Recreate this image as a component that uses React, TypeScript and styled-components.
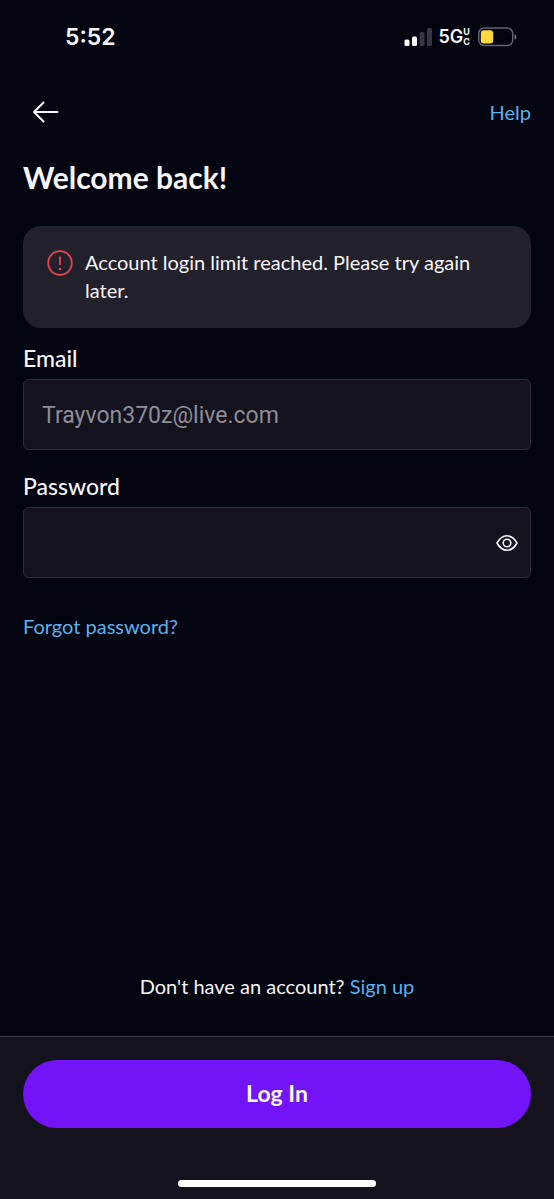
import React, { useState } from "react";
import styled, { createGlobalStyle } from "styled-components";

const GlobalStyle = createGlobalStyle`
  *, *::before, *::after { box-sizing: border-box; }
  body {
    margin: 0;
    background: #020410;
    color: #f7f6fa;
    font-family: Lato, "Liberation Sans", sans-serif;
  }
  button, input { font-family: inherit; }
`;

const Screen = styled.div`
  display: flex;
  flex-direction: column;
  min-height: 100vh;
`;

const StatusBar = styled.div`
  display: flex;
  align-items: center;
  justify-content: space-between;
  height: 74px;
  padding: 0 37px 0 65px;
  font-family: Inter, sans-serif;
`;

const Time = styled.time`
  font-size: 23px;
  line-height: 28px;
  font-weight: 600;
`;

const StatusIcons = styled.div`
  display: flex;
  align-items: center;
`;

const Network = styled.div`
  display: flex;
  align-items: center;
  margin: 0 8px 0 7px;
  font-size: 18px;
  line-height: 20px;
  font-weight: 600;
`;

const NetworkSuffix = styled.span`
  display: flex;
  flex-direction: column;
  font-size: 9px;
  line-height: 10px;
  font-weight: 700;
`;

const Header = styled.header`
  display: flex;
  align-items: center;
  justify-content: space-between;
  height: 76px;
  padding: 0 23px 0 32px;
`;

const IconButton = styled.button`
  display: flex;
  padding: 0;
  border: 0;
  background: none;
  color: inherit;
  cursor: pointer;
`;

const Link = styled.a`
  color: #58b3ed;
  font-size: 20px;
  line-height: 28px;
  text-decoration: none;
`;

const Main = styled.main`
  display: flex;
  flex: 1;
  flex-direction: column;
  padding: 8px 23px 36px;
`;

const Title = styled.h1`
  margin: 0 0 30px;
  font-size: 30px;
  line-height: 38px;
  font-weight: 700;
`;

const Alert = styled.div`
  display: flex;
  gap: 12px;
  margin-bottom: 16px;
  padding: 22px 24px 24px;
  border-radius: 18px;
  background: #21202b;
`;

const AlertIcon = styled.svg`
  flex: none;
`;

const AlertText = styled.p`
  margin: 0;
  font-size: 20px;
  line-height: 28px;
`;

const Form = styled.form`
  display: flex;
  flex-direction: column;
  align-items: flex-start;
`;

const Field = styled.div`
  width: 100%;
  margin-bottom: 22px;
`;

const Label = styled.label`
  display: block;
  margin-bottom: 7px;
  font-size: 23px;
  line-height: 28px;
  font-weight: 500;
`;

const InputBox = styled.div`
  display: flex;
  align-items: center;
  height: 71px;
  padding: 0 11px 0 18px;
  border: 1px solid #2c2b37;
  border-radius: 6px;
  background: #13121d;
`;

const Input = styled.input`
  flex: 1;
  min-width: 0;
  height: 100%;
  padding: 2px 0 0;
  border: 0;
  outline: 0;
  background: none;
  color: #f7f6fa;
  font-family: Roboto, sans-serif;
  font-size: 23px;

  &::placeholder {
    color: #8e8d98;
    opacity: 1;
  }
`;

const ForgotLink = styled(Link)`
  margin-top: 12px;
`;

const SignUpPrompt = styled.p`
  margin: auto 0 0;
  font-size: 20px;
  line-height: 28px;
  text-align: center;
`;

const Footer = styled.footer`
  display: flex;
  flex-direction: column;
  align-items: center;
  padding: 23px 23px 12px;
  border-top: 1px solid #393843;
  background: #13121d;
`;

const LoginButton = styled.button`
  width: 100%;
  height: 68px;
  padding: 0 0 2px;
  border: 0;
  border-radius: 34px;
  background: #7214f5;
  color: #f7f6fa;
  font-size: 23px;
  font-weight: 700;
  cursor: pointer;
`;

const HomeIndicator = styled.div`
  width: 198px;
  max-width: 50%;
  height: 7px;
  margin-top: 52px;
  border-radius: 4px;
  background: #ffffff;
`;

function SignalIcon() {
  return (
    <svg width="28" height="18" viewBox="0 0 28 18" aria-hidden="true">
      <rect x="0.5" y="11.500" width="5" height="6.500" rx="1.5" fill="#fff" />
      <rect x="8" y="8.500" width="5" height="9.500" rx="1.5" fill="#fff" />
      <rect x="15.5" y="4" width="5" height="14" rx="1.5" fill="#363643" />
      <rect x="23" y="0" width="5" height="18" rx="1.5" fill="#363643" />
    </svg>
  );
}

function BatteryIcon() {
  return (
    <svg width="39" height="20" viewBox="0 0 39 20" aria-hidden="true">
      <rect x="0.75" y="1" width="34" height="17.5" rx="5.5" fill="none" stroke="#62626d" strokeWidth="1.5" />
      <rect x="2.8" y="3.2" width="12.4" height="13.2" rx="3" fill="#ffd83d" />
      <path d="M36.6 7.2c2.3.8 2.3 4.6 0 5.4z" fill="#777681" />
    </svg>
  );
}

function EyeIcon() {
  return (
    <svg width="24" height="24" viewBox="0 0 24 24" fill="none" stroke="currentColor" strokeWidth="1.6" aria-hidden="true">
      <path d="M2 12C4.6 7.2 8 4.8 12 4.8S19.4 7.2 22 12C19.4 16.8 16 19.2 12 19.2S4.6 16.8 2 12Z" strokeLinejoin="round" />
      <circle cx="12" cy="12" r="3.8" />
    </svg>
  );
}

export default function App() {
  const [email, setEmail] = useState("");
  const [password, setPassword] = useState("");
  const [visible, setVisible] = useState(false);

  return (
    <Screen>
      <GlobalStyle />
      <StatusBar>
        <Time>5:52</Time>
        <StatusIcons>
          <SignalIcon />
          <Network>
            5G
            <NetworkSuffix>
              <span>U</span>
              <span>C</span>
            </NetworkSuffix>
          </Network>
          <BatteryIcon />
        </StatusIcons>
      </StatusBar>
      <Header>
        <IconButton type="button" aria-label="Back">
          <svg width="28" height="24" viewBox="0 0 28 24" fill="none" stroke="currentColor" strokeWidth="2" strokeLinecap="round" strokeLinejoin="round" aria-hidden="true">
            <path d="M25.5 12H2M11.5 2.500L2 12l9.500 9.500" />
          </svg>
        </IconButton>
        <Link href="#help">Help</Link>
      </Header>
      <Main>
        <Title>Welcome back!</Title>
        <Alert role="alert">
          <AlertIcon width="26" height="30" viewBox="0 0 26 30" fill="none" stroke="#e5484f" aria-hidden="true">
            <circle cx="13" cy="15" r="11.800" strokeWidth="1.8" />
            <path d="M13 8.500v8.500" strokeWidth="1.8" />
            <circle cx="13" cy="21" r="1.300" fill="#e5484f" stroke="none" />
          </AlertIcon>
          <AlertText>Account login limit reached. Please try again later.</AlertText>
        </Alert>
        <Form id="login" onSubmit={(e) => e.preventDefault()}>
          <Field>
            <Label htmlFor="email">Email</Label>
            <InputBox>
              <Input
                id="email"
                type="email"
                placeholder="Trayvon370z@live.com"
                value={email}
                onChange={(e) => setEmail(e.target.value)}
              />
            </InputBox>
          </Field>
          <Field>
            <Label htmlFor="password">Password</Label>
            <InputBox>
              <Input
                id="password"
                type={visible ? "text" : "password"}
                value={password}
                onChange={(e) => setPassword(e.target.value)}
              />
              <IconButton type="button" aria-label="Show password" onClick={() => setVisible(!visible)}>
                <EyeIcon />
              </IconButton>
            </InputBox>
          </Field>
          <ForgotLink href="#forgot">Forgot password?</ForgotLink>
        </Form>
        <SignUpPrompt>
          Don't have an account? <Link href="#signup">Sign up</Link>
        </SignUpPrompt>
      </Main>
      <Footer>
        <LoginButton type="submit" form="login">Log In</LoginButton>
        <HomeIndicator />
      </Footer>
    </Screen>
  );
}
